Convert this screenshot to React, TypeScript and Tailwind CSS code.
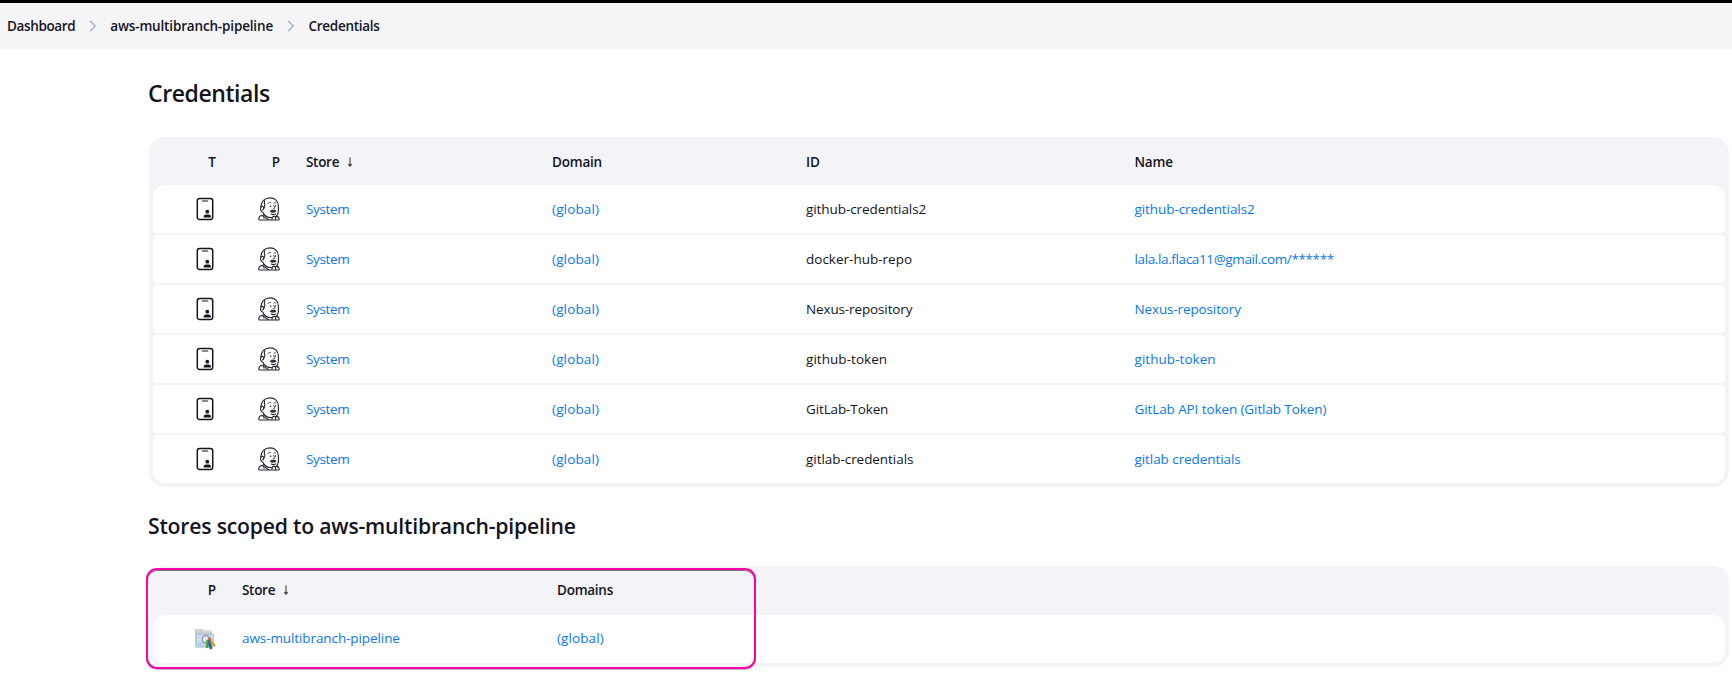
import type { ReactNode } from 'react';

function Separator() {
  return (
    <svg className="h-3 w-2 shrink-0" viewBox="0 0 8 12" fill="none" stroke="#9bafc9" strokeWidth="1.3" strokeLinecap="round" strokeLinejoin="round">
      <path d="M1.5 1.3 6.2 6 1.5 10.7" />
    </svg>
  );
}

function SortArrow() {
  return (
    <svg className="h-3 w-2 shrink-0" viewBox="0 0 8 12" fill="none" stroke="#3c3c44" strokeWidth="1.1">
      <path d="M4 1.500v8.500M2.300 8.200 4 10.200l1.700-2" />
    </svg>
  );
}

function CredentialIcon() {
  return (
    <svg className="h-6 w-[18px]" viewBox="0 0 18 24" fill="none">
      <rect x="1.300" y="1.500" width="15.400" height="21" rx="2.300" stroke="#14141f" strokeWidth="1.500" />
      <path d="M6.300 4h5.400" stroke="#14141f" strokeWidth="1.200" strokeLinecap="round" />
      <circle cx="11.300" cy="14.700" r="1.900" fill="#14141f" />
      <path d="M7.700 20.500v-.9c0-1.300 1.200-2.100 2.400-2.100h2.400c1.300 0 2.400.8 2.400 2.100v.9z" fill="#14141f" />
    </svg>
  );
}

function JenkinsIcon() {
  return (
    <svg className="h-6 w-[22px]" viewBox="0 0 22 24" fill="none" stroke="#2a2a34" strokeWidth="1.150" strokeLinecap="round" strokeLinejoin="round">
      <path d="M3 9.800C2.800 4.600 6.700.900 12 .900c5 0 8.300 3.300 8.400 7.900 0 2.700.3 5-.4 7.600-.4 1.500-1.200 2.700-2.400 3.300" />
      <path d="M6.700 3.600c-.6 1.500-.4 3 .1 4.300.2 1.300-.6 1.900-.6 3M3 9.800c1.400-.9 2.700-.1 2.700 1.400 0 .9-.5 1.500-1 1.700" />
      <path d="M3 9.800c-1.200 2.300 0 4.900 2 5.500.4 1.500 1.200 2.700 2.400 3.500 1.300 1.100 3 1.800 4.900 1.800" />
      <path d="M4.500 18.500c-2.300-.1-3.600 1.500-3.700 3.500 0 .7.300 1 .9 1h18.600c.8 0 1-.4.9-1.100-.1-1.200-.7-2.200-1.800-2.700M4.500 18.500l2-1.100M4.400 18.700c1.300.3 1.700 1.300 1.600 2.400M7.400 18.600l-.3 1.800 3.500 2.400" />
      <path d="M10 6.500c.6-.9 1.500-1.300 2.400-1M15.900 6.200c.6-.6 1.300-.6 1.900-.2M15.600 8.400c.6 1.300 1.600 2.200 1.100 3-.3.500-1 .5-1.500.2" strokeWidth=".85" />
      <path d="M12.300 14.400c.7-1.500 1.900-1.800 3.200-1.100 1-.5 2.100-.2 2.600.9-.5.800-1.200 1.100-2 .9-1.300.6-2.600.4-3.800-.7z" fill="#2a2a34" strokeWidth=".6" />
      <path d="M13.300 17.100c1.500.7 2.900.6 4.200-.2M14.400 20.200c1-1.100 2.500-1.100 3.100-.2.700-.6 1.700-.5 2.300.1M14.400 20.200l-.5 2.500M17.500 20l.2 2.700M12.200 20.500l2.200-.3" />
      <path d="M12.600 9.300h.1M17.400 9h.1" strokeWidth="1.600" />
    </svg>
  );
}

function FolderKeysIcon() {
  return (
    <svg className="h-[22px] w-[22px]" viewBox="0 0 22 22">
      <path d="M1 2.100Q1 1 2 1h6.600q.8 0 1.100.8l.3.8H17q1 0 1 1V18H1z" fill="#c7c9cc" />
      <path d="M1.500 2.200h7.300l.8 1.600h7.700" fill="none" stroke="#dedfe0" />
      <path d="M2.600 6.200h17.200l-.8 13H1.600z" fill="#b9d1ea" stroke="#a1b9d3" strokeWidth=".6" />
      <path d="M3 7h16l-.3 5.300L3 14.500z" fill="#cbdcf0" />
      <circle cx="12" cy="11.300" r="3.700" fill="#e7edf4" stroke="#858b95" strokeWidth="1.100" />
      <path d="M15.500 12.500l5.400 5.500" stroke="#d2a02b" strokeWidth="2.600" />
      <path d="M14 14l-1.100 6.100" stroke="#43a52a" strokeWidth="2.600" />
      <path d="M14.900 13.500l2.300 7.500" stroke="#315f9e" strokeWidth="2.700" />
      <circle cx="13.400" cy="13.700" r="1.900" fill="#62b544" />
      <circle cx="15.500" cy="11.500" r="1.900" fill="#c47240" />
      <circle cx="15" cy="13.600" r="1.500" fill="#4d6692" />
    </svg>
  );
}

function TableFrame({ children }: { children: ReactNode }) {
  return <div className="rounded-2xl bg-[#f3f3f8] px-1 pb-1">{children}</div>;
}

const rowShape = 'flex h-12 items-center rounded-[4px] bg-white';
const link = 'text-[#0b78ea]';

const credentials = [
  { id: 'github-credentials2', idTracking: 'tracking-[-0.08px]', name: 'github-credentials2', nameTracking: 'tracking-[-0.08px]' },
  { id: 'docker-hub-repo', idTracking: 'tracking-[0px]', name: 'lala.la.flaca11@gmail.com/******', nameTracking: 'tracking-[-0.37px]' },
  { id: 'Nexus-repository', idTracking: 'tracking-[-0.13px]', name: 'Nexus-repository', nameTracking: 'tracking-[-0.13px]' },
  { id: 'github-token', idTracking: 'tracking-[0.05px]', name: 'github-token', nameTracking: 'tracking-[0.05px]' },
  { id: 'GitLab-Token', idTracking: 'tracking-[-0.12px]', name: 'GitLab API token (Gitlab Token)', nameTracking: 'tracking-[-0.1px]' },
  { id: 'gitlab-credentials', idTracking: 'tracking-[-0.05px]', name: 'gitlab credentials', nameTracking: 'tracking-[-0.07px]' },
];

export default function App() {
  return (
    <div className="h-[674px] overflow-hidden bg-white font-['Open_Sans','Noto_Sans',sans-serif] text-[13.5px] leading-5 text-[#14141f]">
      <nav className="flex h-[49px] items-center border-t-[3px] border-black bg-[#f5f5f8] pl-[7px] font-semibold">
        <span className="mr-[14px] tracking-[-0.37px]">Dashboard</span>
        <Separator />
        <span className="ml-[13px] mr-[14px] tracking-[-0.16px]">aws-multibranch-pipeline</span>
        <Separator />
        <span className="ml-[13.500px] tracking-[-0.29px]">Credentials</span>
      </nav>

      <main className="pl-[149px] pr-[3px]">
        <h1 className="-ml-px pt-7 text-[23px] font-semibold leading-8 tracking-[-0.42px]">Credentials</h1>

        <section className="pt-7">
          <TableFrame>
            <div className="flex h-12 items-center pt-0.5 font-semibold">
              <span className="w-[63px] text-right">T</span>
              <span className="w-16 text-right">P</span>
              <span className="flex w-[272px] items-center gap-[7px] pl-[26px] tracking-[-0.3px]">Store <SortArrow /></span>
              <span className="w-[254px] tracking-[-0.2px]">Domain</span>
              <span className="w-[328.5px]">ID</span>
              <span className="tracking-[-0.2px]">Name</span>
            </div>
            <div className="flex flex-col gap-0.5">
              {credentials.map((item) => (
                <div key={item.id} className={`${rowShape} first:rounded-t-xl last:rounded-b-xl`}>
                  <span className="flex w-[61px] justify-end"><CredentialIcon /></span>
                  <span className="flex w-[66px] justify-end"><JenkinsIcon /></span>
                  <a className={`${link} w-[272px] pl-[26px] tracking-[-0.33px]`}>System</a>
                  <a className={`${link} w-[254px] tracking-[0.15px]`}>(global)</a>
                  <span className={`w-[328.5px] ${item.idTracking}`}>{item.id}</span>
                  <a className={`${link} ${item.nameTracking}`}>{item.name}</a>
                </div>
              ))}
            </div>
          </TableFrame>
        </section>

        <h2 className="-ml-px pt-[23px] text-[21.2px] font-semibold leading-8 tracking-[-0.21px]">Stores scoped to aws-multibranch-pipeline</h2>

        <section className="relative pt-6">
          <TableFrame>
            <div className="flex h-[49px] items-center pb-px font-semibold">
              <span className="w-[63px] text-right">P</span>
              <span className="flex w-[341px] items-center gap-[7px] pl-[26px] tracking-[-0.3px]">Store <SortArrow /></span>
              <span className="tracking-[-0.25px]">Domains</span>
            </div>
            <div className="flex h-12 items-center rounded-xl bg-white">
              <span className="flex w-[63px] justify-end"><FolderKeysIcon /></span>
              <a className={`${link} w-[341px] pb-0.5 pl-[26px] tracking-[-0.09px]`}>aws-multibranch-pipeline</a>
              <a className={`${link} pb-0.5 tracking-[0.1px]`}>(global)</a>
            </div>
          </TableFrame>
          <div className="pointer-events-none absolute -left-[3px] top-[26px] h-[101px] w-[610px] rounded-[11px] border-2 border-[#ff00a8] shadow-[0_0.5px_0_#77717b,inset_0_1px_0_#77717b]" />
        </section>
      </main>
    </div>
  );
}
